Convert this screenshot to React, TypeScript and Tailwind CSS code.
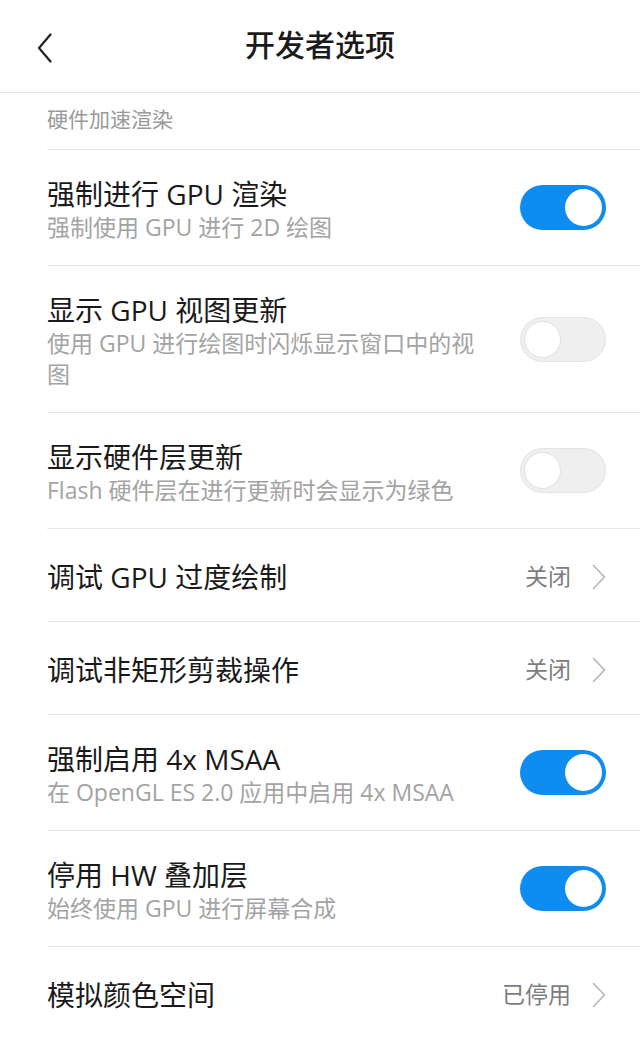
import React from 'react';

type Row =
  | { id: number; title: string; desc?: string; kind: 'toggle'; on: boolean }
  | { id: number; title: string; kind: 'link'; value: string };

const rows: Row[] = [
  { id: 1, title: '强制进行 GPU 渲染', desc: '强制使用 GPU 进行 2D 绘图', kind: 'toggle', on: true },
  { id: 2, title: '显示 GPU 视图更新', desc: '使用 GPU 进行绘图时闪烁显示窗口中的视图', kind: 'toggle', on: false },
  { id: 3, title: '显示硬件层更新', desc: 'Flash 硬件层在进行更新时会显示为绿色', kind: 'toggle', on: false },
  { id: 4, title: '调试 GPU 过度绘制', kind: 'link', value: '关闭' },
  { id: 5, title: '调试非矩形剪裁操作', kind: 'link', value: '关闭' },
  { id: 6, title: '强制启用 4x MSAA', desc: '在 OpenGL ES 2.0 应用中启用 4x MSAA', kind: 'toggle', on: true },
  { id: 7, title: '停用 HW 叠加层', desc: '始终使用 GPU 进行屏幕合成', kind: 'toggle', on: true },
  { id: 8, title: '模拟颜色空间', kind: 'link', value: '已停用' },
];

const Toggle = ({ on }: { on: boolean }) =>
  on ? (
    <div className="w-[86px] h-[45px] rounded-full bg-[#0f8cf0] flex items-center justify-end pr-[4px] shrink-0">
      <div className="w-[37px] h-[37px] rounded-full bg-white" />
    </div>
  ) : (
    <div className="w-[86px] h-[45px] rounded-full bg-[#efefef] border border-[#e3e3e3] flex items-center pl-[3px] shrink-0">
      <div className="w-[37px] h-[37px] rounded-full bg-white border border-[#e0e0e0]" />
    </div>
  );

const Chevron = () => (
  <svg width="14" height="26" viewBox="0 0 14 26" fill="none" className="shrink-0">
    <path d="M1.5 1.5 L12.5 13 L1.5 24.5" stroke="#b5b5b5" strokeWidth="1.6" strokeLinecap="round" strokeLinejoin="round" />
  </svg>
);

const App: React.FC = () => {
  return (
    <div
      className="w-[640px] min-h-[1038px] bg-white text-[#1a1a1a]"
      style={{ fontFamily: '"Open Sans", "Noto Sans CJK SC", sans-serif' }}
    >
      <div className="h-[93px] border-b border-[#e6e6e6] flex items-center relative">
        <svg width="16" height="30" viewBox="0 0 16 30" fill="none" className="absolute left-[37px] top-[33px]">
          <path d="M13.5 1.5 L2 15 L13.5 28.5" stroke="#222" strokeWidth="2.2" strokeLinecap="round" strokeLinejoin="round" />
        </svg>
        <h1 className="w-full text-center text-[30px] font-medium leading-none pb-[2px]">开发者选项</h1>
      </div>

      <div className="ml-[47px] h-[57px] border-b border-[#e6e6e6] flex items-center pb-[2px] text-[21px] text-[#999999]">
        硬件加速渲染
      </div>

      {rows.map((row) => (
        <div key={row.id} className="ml-[47px] pr-[34px] border-b border-[#e8e8e8] flex items-center last:border-b-0">
          {row.kind === 'toggle' ? (
            <>
              <div className="flex-1 pt-[26px] pb-[22px] pr-[30px]">
                <div className="text-[28px] leading-[36px]">{row.title}</div>
                <div className="text-[23px] leading-[31px] text-[#a3a3a3]">{row.desc}</div>
              </div>
              <Toggle on={row.on} />
            </>
          ) : (
            <div className="flex-1 h-[92px] pt-[3px] flex items-center">
              <div className="flex-1 text-[28px] leading-[36px]">{row.title}</div>
              <span className="text-[23px] text-[#7d7d7d] mr-[21px]">{row.value}</span>
              <Chevron />
            </div>
          )}
        </div>
      ))}
    </div>
  );
};

export default App;
